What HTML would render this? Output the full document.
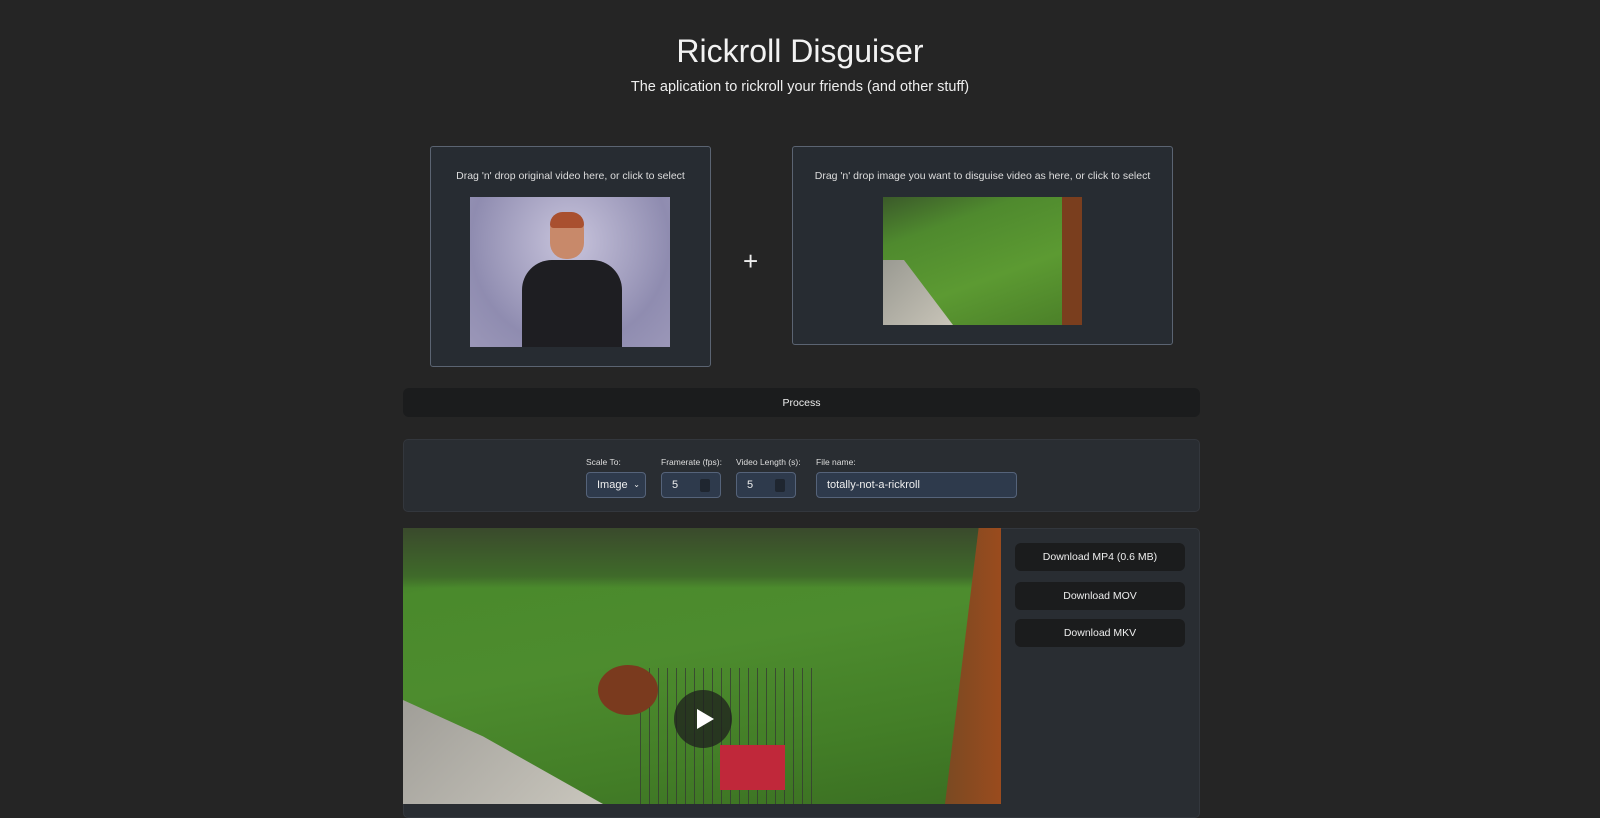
<!DOCTYPE html>
<html><head><style>
*{box-sizing:border-box;margin:0;padding:0}
body{width:1600px;height:804px;overflow:hidden;background:#252525;font-family:"Liberation Sans",sans-serif;color:#eee;position:relative}
.a{position:absolute}
.t{text-align:center;width:1600px;left:0}
.dz{background:#272c32;border:1px solid #5b6472;border-radius:3px}
.lbl{font-size:10.5px;color:#ddd;text-align:center}
.panel{background:#292d32;border:1px solid #33373d;border-radius:5px}
.inp{background:#2e3a4c;border:1px solid #55637a;border-radius:4px;font-size:11px;color:#eee;padding-left:10px;line-height:24px;height:26px}
.btn{background:#1b1c1d;border-radius:6px;font-size:10.5px;color:#eee;text-align:center;line-height:29px;height:28px}
.sm{font-size:8.5px;color:#ddd}
</style></head><body>
<div class="a t" style="top:33px;font-size:32px;color:#f2f2f2">Rickroll Disguiser</div>
<div class="a t" style="top:79px;font-size:14.5px;color:#eee">The aplication to rickroll your friends (and other stuff)</div>

<div class="a dz" style="left:430px;top:146px;width:281px;height:221px"></div>
<div class="a lbl" style="left:430px;top:170px;width:281px">Drag 'n' drop original video here, or click to select</div>
<div class="a" style="left:470px;top:197px;width:200px;height:150px;background:radial-gradient(ellipse at 50% 30%,#c8c4dc,#8f8cb0 70%,#9b97b8)"></div>
<div class="a" style="left:522px;top:260px;width:100px;height:87px;background:#1e1e22;border-radius:30px 30px 0 0"></div>
<div class="a" style="left:550px;top:215px;width:34px;height:44px;background:#c8896a;border-radius:14px 14px 16px 16px"></div>
<div class="a" style="left:550px;top:212px;width:34px;height:16px;background:#a9502f;border-radius:14px 14px 4px 4px"></div>

<div class="a" style="left:743px;top:246px;font-size:26px;color:#eee">+</div>

<div class="a dz" style="left:792px;top:146px;width:381px;height:199px"></div>
<div class="a lbl" style="left:792px;top:170px;width:381px">Drag 'n' drop image you want to disguise video as here, or click to select</div>
<div class="a" style="left:883px;top:197px;width:199px;height:128px;background:linear-gradient(160deg,#3b5a2a 0%,#4f8a2e 25%,#5c9a32 60%,#4a7e28 100%)"></div>
<div class="a" style="left:883px;top:260px;width:70px;height:65px;background:linear-gradient(135deg,#9a9a92,#c8c4b8);clip-path:polygon(0 0,30% 0,100% 100%,0 100%)"></div>
<div class="a" style="left:1062px;top:197px;width:20px;height:128px;background:#7a3e1e"></div>

<div class="a btn" style="left:403px;top:388px;width:797px;height:29px;line-height:31px">Process</div>

<div class="a panel" style="left:403px;top:439px;width:797px;height:73px"></div>
<div class="a sm" style="left:586px;top:457px">Scale To:</div>
<div class="a sm" style="left:661px;top:457px">Framerate (fps):</div>
<div class="a sm" style="left:736px;top:457px">Video Length (s):</div>
<div class="a sm" style="left:816px;top:457px">File name:</div>
<div class="a inp" style="left:586px;top:472px;width:60px">Image <span style="float:right;margin-right:5px;font-size:8px">⌄</span></div>
<div class="a inp" style="left:661px;top:472px;width:60px">5<span style="position:absolute;left:38px;top:6px;width:10px;height:13px;background:#1f2630;border-radius:2px"></span></div>
<div class="a inp" style="left:736px;top:472px;width:60px">5<span style="position:absolute;left:38px;top:6px;width:10px;height:13px;background:#1f2630;border-radius:2px"></span></div>
<div class="a inp" style="left:816px;top:472px;width:201px">totally-not-a-rickroll</div>

<div class="a panel" style="left:403px;top:528px;width:797px;height:290px"></div>
<div class="a" style="left:403px;top:528px;width:598px;height:276px;background:linear-gradient(170deg,#3c6a28 0%,#4a8a2c 18%,#4d8c2e 45%,#437e27 75%,#3a6e22 100%)"></div>
<div class="a" style="left:403px;top:528px;width:598px;height:60px;background:linear-gradient(180deg,#3a4a2c,#3f6a2a 80%,transparent)"></div>
<div class="a" style="left:403px;top:700px;width:200px;height:104px;background:linear-gradient(135deg,#a09e98,#c9c6bd);clip-path:polygon(0 0,40% 35%,100% 100%,0 100%)"></div>
<div class="a" style="left:945px;top:528px;width:56px;height:276px;background:linear-gradient(90deg,#7a4a22,#9a4b1e);clip-path:polygon(60% 0,100% 0,100% 100%,0 100%)"></div>
<div class="a" style="left:640px;top:668px;width:175px;height:136px;background:repeating-linear-gradient(90deg,#333 0 1px,transparent 1px 9px);opacity:.7"></div>
<div class="a" style="left:720px;top:745px;width:65px;height:45px;background:#c0283a"></div>
<div class="a" style="left:598px;top:665px;width:60px;height:50px;background:#7a3a1e;border-radius:50%"></div>
<div class="a" style="left:674px;top:690px;width:58px;height:58px;background:rgba(30,30,30,.75);border-radius:50%"></div>
<div class="a" style="left:697px;top:709px;width:0;height:0;border-left:17px solid #fff;border-top:10px solid transparent;border-bottom:10px solid transparent"></div>

<div class="a btn" style="left:1015px;top:543px;width:170px">Download MP4 (0.6 MB)</div>
<div class="a btn" style="left:1015px;top:582px;width:170px">Download MOV</div>
<div class="a btn" style="left:1015px;top:619px;width:170px">Download MKV</div>
</body></html>
